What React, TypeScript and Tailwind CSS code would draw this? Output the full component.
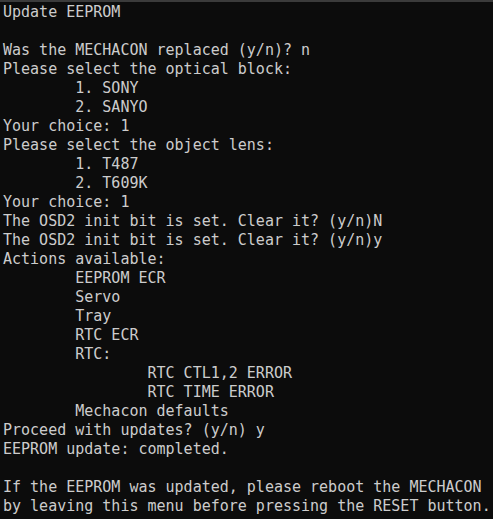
const lines = [
  "Update EEPROM",
  "",
  "Was the MECHACON replaced (y/n)? n",
  "Please select the optical block:",
  "\t1. SONY",
  "\t2. SANYO",
  "Your choice: 1",
  "Please select the object lens:",
  "\t1. T487",
  "\t2. T609K",
  "Your choice: 1",
  "The OSD2 init bit is set. Clear it? (y/n)N",
  "The OSD2 init bit is set. Clear it? (y/n)y",
  "Actions available:",
  "\tEEPROM ECR",
  "\tServo",
  "\tTray",
  "\tRTC ECR",
  "\tRTC:",
  "\t\tRTC CTL1,2 ERROR",
  "\t\tRTC TIME ERROR",
  "\tMechacon defaults",
  "Proceed with updates? (y/n) y",
  "EEPROM update: completed.",
  "",
  "If the EEPROM was updated, please reboot the MECHACON",
  "by leaving this menu before pressing the RESET button.",
]

export default function App() {
  return (
    <div className="w-[493px] h-[519px] bg-[#0c0c0c] border-t-2 border-[#3b3b3b] overflow-hidden">
      <pre
        className="pl-[3px] pt-px text-[15px] leading-[19px] text-[#cccccc] [tab-size:8]"
        style={{ fontFamily: '"DejaVu Sans Mono", "Liberation Mono", monospace' }}
      >
        {lines.map((line, i) => (
          <div key={i} className="h-[19px]">
            {line}
          </div>
        ))}
      </pre>
    </div>
  )
}
